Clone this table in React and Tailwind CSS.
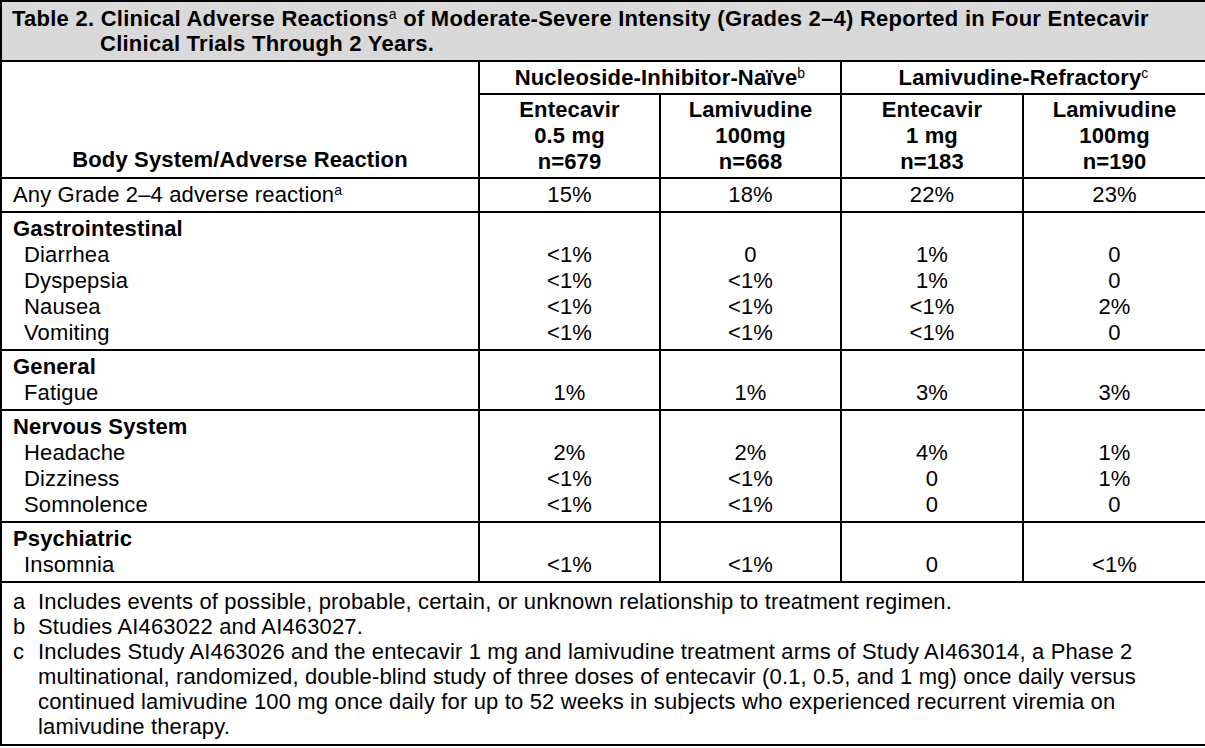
import React from 'react';

const groups = [
  {
    name: 'Gastrointestinal',
    rows: [
      ['Diarrhea', '<1%', '0', '1%', '0'],
      ['Dyspepsia', '<1%', '<1%', '1%', '0'],
      ['Nausea', '<1%', '<1%', '<1%', '2%'],
      ['Vomiting', '<1%', '<1%', '<1%', '0'],
    ],
  },
  { name: 'General', rows: [['Fatigue', '1%', '1%', '3%', '3%']] },
  {
    name: 'Nervous System',
    rows: [
      ['Headache', '2%', '2%', '4%', '1%'],
      ['Dizziness', '<1%', '<1%', '0', '1%'],
      ['Somnolence', '<1%', '<1%', '0', '0'],
    ],
  },
  { name: 'Psychiatric', rows: [['Insomnia', '<1%', '<1%', '0', '<1%']] },
];

// superscript footnote marker, raised by hand (preflight resets <sup>)
const Sup = ({ children }) => (
  <span className="relative -top-[7px] text-[14px] font-normal leading-none">{children}</span>
);

const line = 'border-black';

export default function App() {
  return (
    <div
      className="w-[1205px] h-[748px] bg-white text-black text-[22px] leading-[26px] tracking-[0.15px]"
      style={{ fontFamily: '"Liberation Sans", Arial, sans-serif' }}
    >
      <table className="table-fixed border-collapse w-[1205px] border-2 border-black">
        <colgroup>
          <col className="w-[478px]" />
          <col className="w-[181px]" />
          <col className="w-[181px]" />
          <col className="w-[182px]" />
          <col className="w-[183px]" />
        </colgroup>
        <thead>
          <tr>
            <th
              colSpan={5}
              className={`h-[60px] bg-[#d9d9d9] border-b-2 ${line} text-left font-bold text-[22px] leading-[25px] tracking-[0.25px] pl-[10px] pt-[4px] pb-[4px] whitespace-nowrap`}
            >
              <div>
                Table 2. Clinical Adverse Reactions<Sup>a</Sup> of Moderate-Severe Intensity (Grades 2–4) Reported in Four Entecavir
              </div>
              <div className="pl-[88px]">Clinical Trials Through 2 Years.</div>
            </th>
          </tr>
          <tr>
            <th rowSpan={2} className={`border-r-2 border-b-2 ${line} align-bottom font-bold pb-[4px]`}>
              Body System/Adverse Reaction
            </th>
            <th colSpan={2} className={`h-[33px] border-r-2 border-b-2 ${line} font-bold`}>
              Nucleoside-Inhibitor-Naïve<Sup>b</Sup>
            </th>
            <th colSpan={2} className={`border-b-2 ${line} font-bold`}>
              Lamivudine-Refractory<Sup>c</Sup>
            </th>
          </tr>
          <tr>
            {[
              ['Entecavir', '0.5 mg', 'n=679'],
              ['Lamivudine', '100mg', 'n=668'],
              ['Entecavir', '1 mg', 'n=183'],
              ['Lamivudine', '100mg', 'n=190'],
            ].map((c, i) => (
              <th
                key={i}
                className={`h-[84px] border-b-2 ${i < 3 ? 'border-r-2' : ''} ${line} font-bold align-top pt-[2px]`}
              >
                {c.map((t) => (
                  <div key={t}>{t}</div>
                ))}
              </th>
            ))}
          </tr>
        </thead>
        <tbody>
          <tr>
            <td className={`h-[34px] border-r-2 border-b-2 ${line} pl-[11px]`}>
              Any Grade 2–4 adverse reaction<Sup>a</Sup>
            </td>
            {['15%', '18%', '22%', '23%'].map((v, i) => (
              <td key={i} className={`border-b-2 ${i < 3 ? 'border-r-2' : ''} ${line} text-center`}>
                {v}
              </td>
            ))}
          </tr>
          {groups.map((g) => (
            <tr key={g.name}>
              <td className={`border-r-2 border-b-2 ${line} pl-[11px] pt-[3px] pb-[3px] align-top`}>
                <div className="font-bold">{g.name}</div>
                {g.rows.map((r) => (
                  <div key={r[0]} className="pl-[11px]">
                    {r[0]}
                  </div>
                ))}
              </td>
              {[1, 2, 3, 4].map((ci) => (
                <td
                  key={ci}
                  className={`border-b-2 ${ci < 4 ? 'border-r-2' : ''} ${line} text-center pt-[3px] pb-[3px] align-top`}
                >
                  <div>&nbsp;</div>
                  {g.rows.map((r) => (
                    <div key={r[0]}>{r[ci]}</div>
                  ))}
                </td>
              ))}
            </tr>
          ))}
          <tr>
            <td
              colSpan={5}
              className="pl-[11px] pt-[6px] pb-[5px] leading-[25px] tracking-[0.15px] align-top whitespace-nowrap"
            >
              {[
                ['a', ['Includes events of possible, probable, certain, or unknown relationship to treatment regimen.']],
                ['b', ['Studies AI463022 and AI463027.']],
                [
                  'c',
                  [
                    'Includes Study AI463026 and the entecavir 1 mg and lamivudine treatment arms of Study AI463014, a Phase 2',
                    'multinational, randomized, double-blind study of three doses of entecavir (0.1, 0.5, and 1 mg) once daily versus',
                    'continued lamivudine 100 mg once daily for up to 52 weeks in subjects who experienced recurrent viremia on',
                    'lamivudine therapy.',
                  ],
                ],
              ].map(([k, lines]) => (
                <div key={k} className="flex">
                  <span className="w-[25px] shrink-0">{k}</span>
                  <div>
                    {lines.map((t) => (
                      <div key={t}>{t}</div>
                    ))}
                  </div>
                </div>
              ))}
            </td>
          </tr>
        </tbody>
      </table>
    </div>
  );
}
